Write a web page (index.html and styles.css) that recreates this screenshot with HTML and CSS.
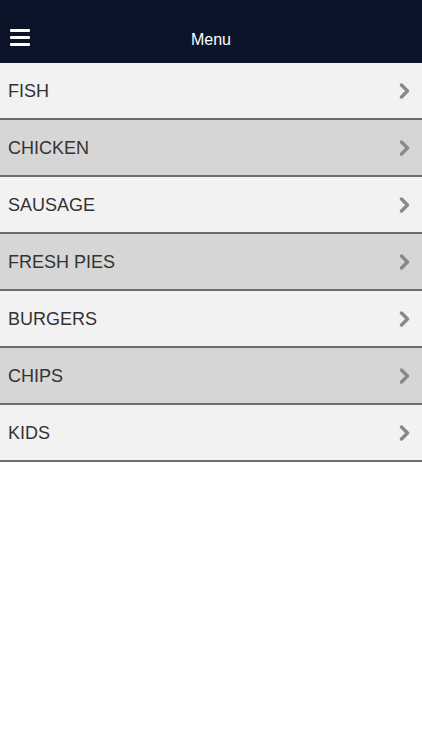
FILE: index.html
```html
<!DOCTYPE html>
<html lang="en">
<head>
  <meta charset="UTF-8" />
  <meta name="viewport" content="width=device-width, initial-scale=1.0" />
  <title>Menu</title>
  <link rel="stylesheet" href="styles.css">
</head>
<body>

  <header class="topbar">
    <button class="menu-btn" aria-label="Open menu">
      <span></span><span></span><span></span>
    </button>
    <h1 class="title">Menu</h1>
  </header>

  <!-- Categorias -->
  <ul class="category-list">
    <li class="category"><span>FISH</span><svg class="chevron" viewBox="0 0 12 16"><path d="M2.5 2 L8.5 8 L2.5 14" /></svg></li>
    <li class="category alt"><span>CHICKEN</span><svg class="chevron" viewBox="0 0 12 16"><path d="M2.5 2 L8.5 8 L2.5 14" /></svg></li>
    <li class="category"><span>SAUSAGE</span><svg class="chevron" viewBox="0 0 12 16"><path d="M2.5 2 L8.5 8 L2.5 14" /></svg></li>
    <li class="category alt"><span>FRESH PIES</span><svg class="chevron" viewBox="0 0 12 16"><path d="M2.5 2 L8.5 8 L2.5 14" /></svg></li>
    <li class="category"><span>BURGERS</span><svg class="chevron" viewBox="0 0 12 16"><path d="M2.5 2 L8.5 8 L2.5 14" /></svg></li>
    <li class="category alt"><span>CHIPS</span><svg class="chevron" viewBox="0 0 12 16"><path d="M2.5 2 L8.5 8 L2.5 14" /></svg></li>
    <li class="category"><span>KIDS</span><svg class="chevron" viewBox="0 0 12 16"><path d="M2.5 2 L8.5 8 L2.5 14" /></svg></li>
  </ul>

</body>
</html>
```

FILE: styles.css
```css
body {
  margin: 0;
  background: #ffffff;
  font-family: 'Liberation Sans', Arial, sans-serif;
}

.topbar {
  height: 63px;
  background: #0b1429;
  display: flex;
  align-items: center;
  position: relative;
}
.menu-btn {
  position: absolute;
  left: 10px;
  top: 29px;
  width: 20px;
  padding: 0;
  border: none;
  background: none;
  display: flex;
  flex-direction: column;
  gap: 4px;
}
.menu-btn span {
  display: block;
  height: 3px;
  background: #ffffff;
  border-radius: 1px;
}
.title {
  flex: 1;
  margin: 0;
  padding-top: 16px;
  text-align: center;
  color: #ffffff;
  font-size: 16px;
  font-weight: normal;
}

.category-list {
  list-style: none;
  margin: 0;
  padding: 0;
}
.category {
  box-sizing: content-box;
  height: 53px;
  display: flex;
  align-items: center;
  justify-content: space-between;
  padding: 2px 11px 0 8px;
  background: #f2f2f2;
  border-bottom: 2px solid #6b6b78;
  color: #333333;
  font-size: 18px;
}
.category.alt {
  background: #d6d6d6;
}
.chevron {
  flex-shrink: 0;
  width: 12px;
  height: 16px;
  margin-top: -2px;
  fill: none;
  stroke: #888888;
  stroke-width: 3.4;
  stroke-linecap: round;
  stroke-linejoin: round;
}
```
